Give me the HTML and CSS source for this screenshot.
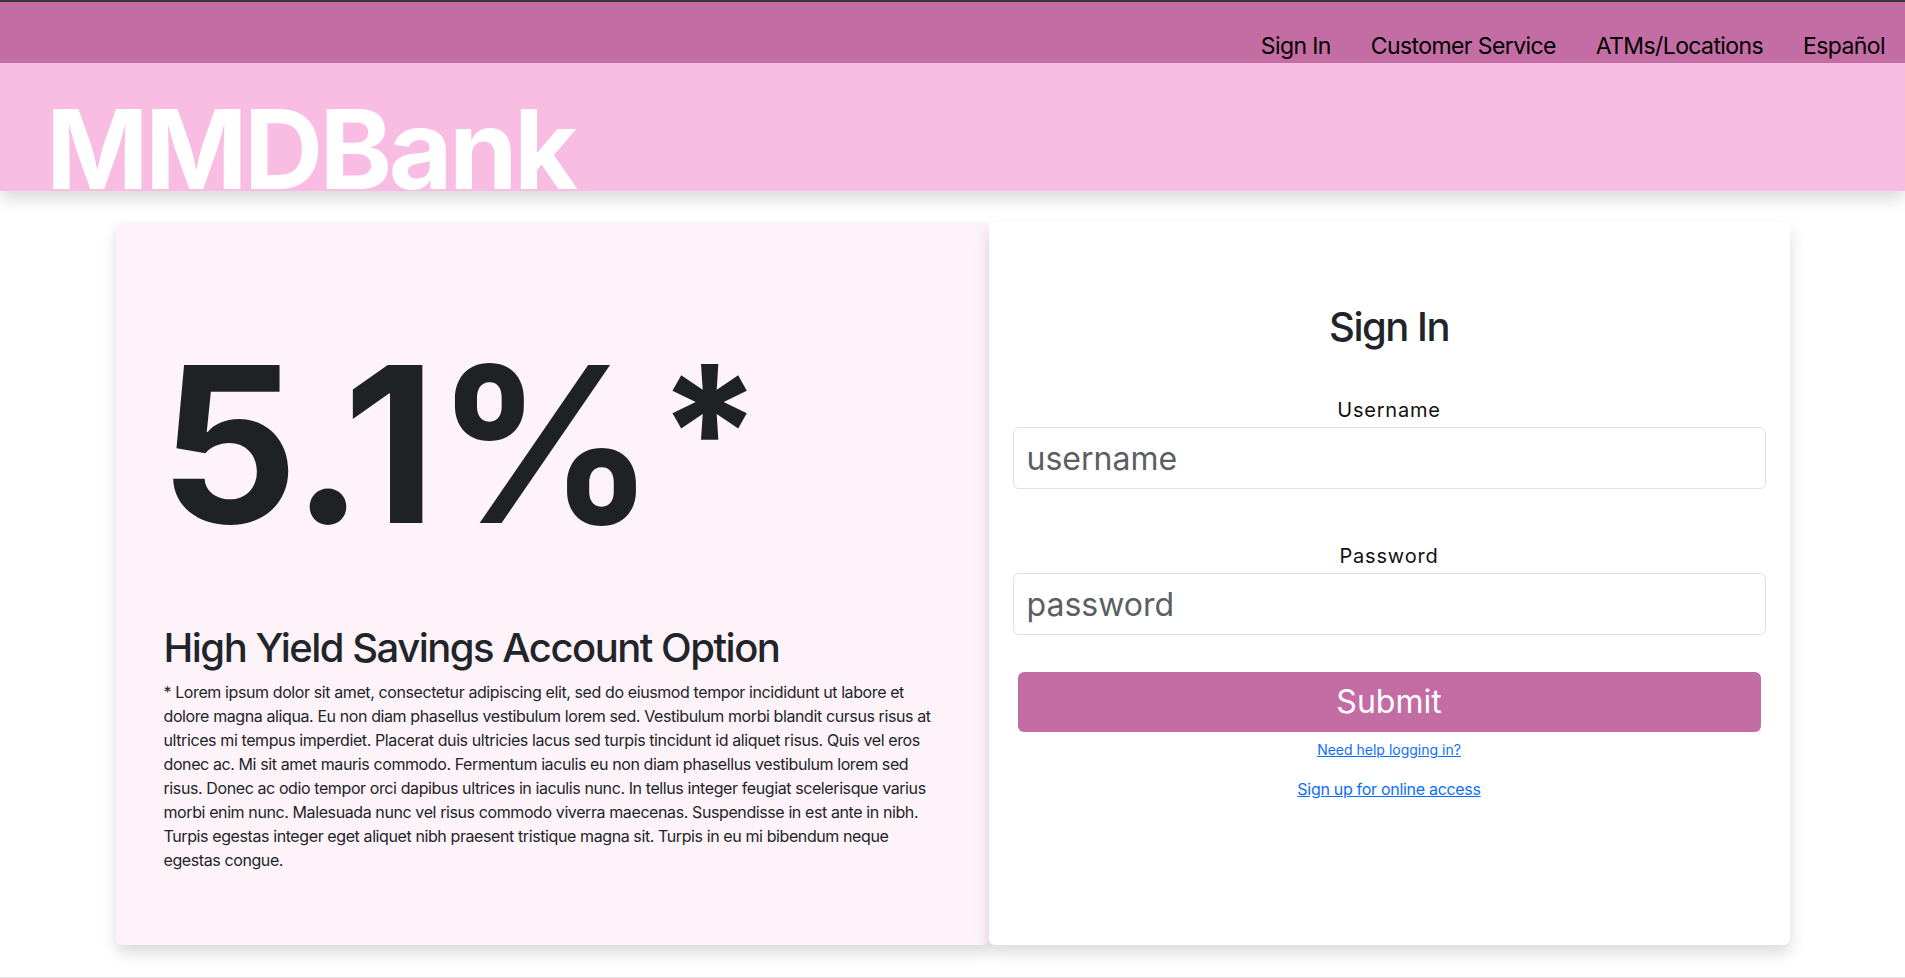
FILE: index.html
```html
<!DOCTYPE html>
<html lang="en">
<head>
<meta charset="utf-8">
<title>MMDBank</title>
<link rel="stylesheet" href="styles.css">
</head>
<body>
<header class="topbar">
  <nav class="nav">
    <a class="nav-link" href="#">Sign In</a>
    <a class="nav-link" href="#">Customer Service</a>
    <a class="nav-link" href="#">ATMs/Locations</a>
    <a class="nav-link" href="#">Español</a>
  </nav>
</header>
<div class="brand">
  <h1 class="brand-name">MMDBank</h1>
</div>
<main class="main">
  <section class="promo">
    <div class="rate">5.1%<span class="rate-star">*</span></div>
    <h2 class="promo-title">High Yield Savings Account Option</h2>
    <p class="promo-text">* Lorem ipsum dolor sit amet, consectetur adipiscing elit, sed do eiusmod tempor incididunt ut labore et dolore magna aliqua. Eu non diam phasellus vestibulum lorem sed. Vestibulum morbi blandit cursus risus at ultrices mi tempus imperdiet. Placerat duis ultricies lacus sed turpis tincidunt id aliquet risus. Quis vel eros donec ac. Mi sit amet mauris commodo. Fermentum iaculis eu non diam phasellus vestibulum lorem sed risus. Donec ac odio tempor orci dapibus ultrices in iaculis nunc. In tellus integer feugiat scelerisque varius morbi enim nunc. Malesuada nunc vel risus commodo viverra maecenas. Suspendisse in est ante in nibh. Turpis egestas integer eget aliquet nibh praesent tristique magna sit. Turpis in eu mi bibendum neque egestas congue.</p>
  </section>
  <section class="signin">
    <h2 class="signin-title">Sign In</h2>
    <form class="signin-form">
      <div class="field">
        <label class="field-label" for="username">Username</label>
        <input class="field-input" id="username" type="text" placeholder="username">
      </div>
      <div class="field field-password">
        <label class="field-label" for="password">Password</label>
        <input class="field-input" id="password" type="password" placeholder="password">
      </div>
      <button class="submit" type="button">Submit</button>
      <a class="help-link" href="#">Need help logging in?</a>
      <a class="signup-link" href="#">Sign up for online access</a>
    </form>
  </section>
</main>
<footer class="footer"></footer>
</body>
</html>
```

FILE: styles.css
```css
* {
  box-sizing: border-box;
}

html, body {
  margin: 0;
  padding: 0;
}

body {
  font-family: Inter, "Noto Sans", "DejaVu Sans", sans-serif;
  color: #212529;
  background: #ffffff;
}

.topbar {
  height: 63px;
  border-top: 2px solid #3a3a3a;
  background: #c46ca4;
  display: flex;
  align-items: flex-end;
  justify-content: flex-end;
  padding-bottom: 2px;
  position: relative;
  z-index: 3;
}

.nav {
  display: flex;
}

.nav-link {
  font-size: 23px;
  line-height: 30px;
  letter-spacing: -0.6px;
  color: #000000;
  text-decoration: none;
  padding: 0 20px;
}

.brand {
  height: 128px;
  background: #f9bde4;
  overflow: hidden;
  box-shadow: 0 8px 16px rgba(0, 0, 0, 0.15);
  position: relative;
  z-index: 2;
  padding: 31px 0 0 46px;
}

.brand-name {
  margin: 0;
  font-size: 110px;
  line-height: 110px;
  font-weight: 700;
  letter-spacing: -3.6px;
  color: #ffffff;
}

.main {
  display: grid;
  grid-template-columns: 873px 801px;
  justify-content: center;
  margin: 31px 0 32px;
}

.promo,
.signin {
  height: 723px;
  border-radius: 6px;
  box-shadow: 0 8px 16px rgba(0, 0, 0, 0.15);
}

.promo {
  background: #fdf3f9;
  padding: 114px 48px 48px;
}

.signin {
  background: #ffffff;
  padding: 24px;
  position: relative;
  z-index: 1;
}

.rate {
  font-size: 217px;
  line-height: 217px;
  font-weight: 700;
  letter-spacing: -1.5px;
  color: #1f2225;
  text-indent: -4px;
}

.rate-star {
  font-size: 185px;
  vertical-align: 24px;
  line-height: 0;
  margin-left: 4px;
}

.promo-title {
  margin: 71px 0 8px;
  font-size: 40px;
  line-height: 48px;
  font-weight: 500;
  letter-spacing: -1.5px;
}

.promo-text {
  margin: 0;
  font-size: 16px;
  line-height: 24px;
  letter-spacing: -0.4px;
}

.signin-title {
  margin: 57px 0 0;
  font-size: 40px;
  line-height: 48px;
  font-weight: 500;
  letter-spacing: -1.5px;
  text-align: center;
}

.signin-form {
  display: flex;
  flex-direction: column;
  align-items: center;
}

.field {
  width: 100%;
  display: flex;
  flex-direction: column;
  align-items: center;
  margin-top: 44px;
}

.field-password {
  margin-top: 52px;
}

.field-label {
  font-size: 20px;
  line-height: 30px;
  letter-spacing: 0.8px;
  margin-bottom: 2px;
  color: #111111;
}

.field-input {
  width: 100%;
  height: 62px;
  border: 1px solid #dee2e6;
  border-radius: 6px;
  padding: 0 13px;
  font-family: inherit;
  font-size: 32px;
  color: #212529;
  background: #ffffff;
}

.field-input::placeholder {
  color: #5b5f63;
}

.submit {
  margin-top: 37px;
  width: calc(100% - 10px);
  height: 60px;
  border: none;
  border-radius: 6px;
  background: #c46ca4;
  color: #ffffff;
  font-family: inherit;
  font-size: 32px;
  line-height: 1;
}

.help-link {
  margin-top: 7px;
  font-size: 14px;
  line-height: 21px;
  color: #0d6efd;
  text-decoration: underline;
}

.signup-link {
  margin-top: 17px;
  font-size: 16px;
  line-height: 24px;
  letter-spacing: -0.3px;
  color: #0d6efd;
  text-decoration: underline;
}

.footer {
  border-top: 1px solid #e5e5e5;
  height: 40px;
}
```
